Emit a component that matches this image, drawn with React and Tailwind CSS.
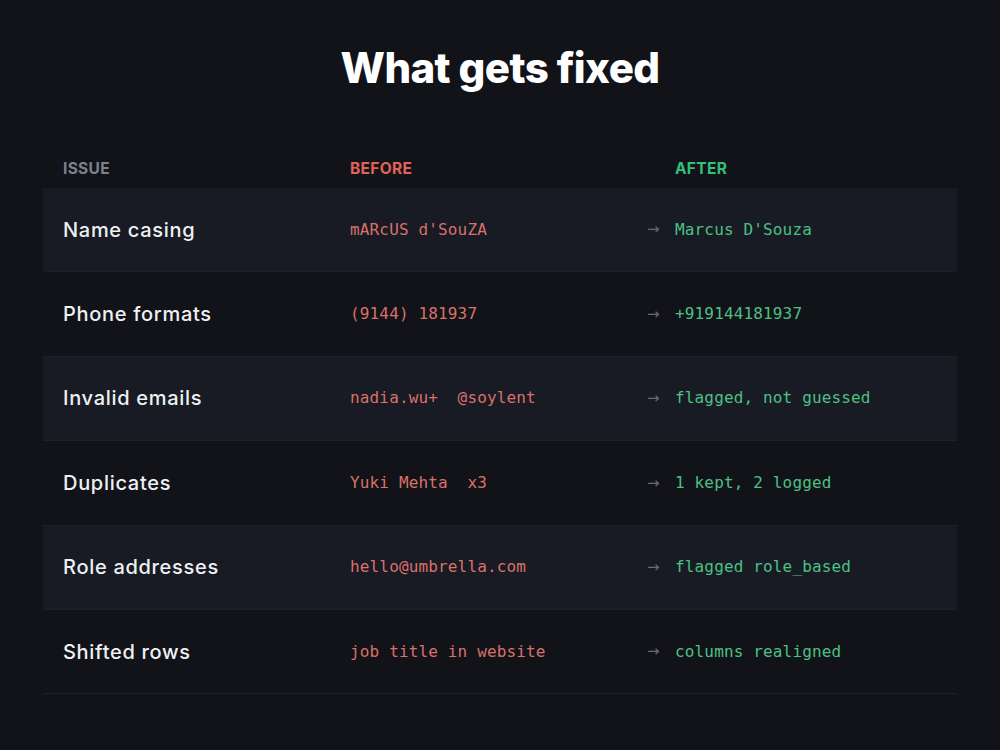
const rows = [
  { issue: 'Name casing', before: "mARcUS d'SouZA", after: "Marcus D'Souza" },
  { issue: 'Phone formats', before: '(9144) 181937', after: '+919144181937' },
  { issue: 'Invalid emails', before: 'nadia.wu+  @soylent', after: 'flagged, not guessed' },
  { issue: 'Duplicates', before: 'Yuki Mehta  x3', after: '1 kept, 2 logged' },
  { issue: 'Role addresses', before: 'hello@umbrella.com', after: 'flagged role_based' },
  { issue: 'Shifted rows', before: 'job title in website', after: 'columns realigned' },
];

const sans = "font-['Inter','Noto_Sans',sans-serif]";
const mono = "font-['DejaVu_Sans_Mono','Liberation_Mono',monospace] text-[16px] tracking-[0.15px] whitespace-pre";

export default function App() {
  return (
    <div className={`min-h-[750px] w-full bg-[#121318] ${sans}`}>
      <h1 className="pt-[42px] text-center text-[42px] font-extrabold leading-[52px] tracking-[-0.6px] text-white">
        What gets fixed
      </h1>

      <div className="mx-[43px] mt-[56px]">
        {/* Header */}
        <div className="flex h-[38px] items-start pt-2 text-[15.5px] font-bold uppercase leading-[22px] tracking-[0.3px]">
          <div className="w-[287px] pl-5 text-[#7b818e]">Issue</div>
          <div className="w-[297px] pl-5 text-[#e0625a]">Before</div>
          <div className="flex-1 pl-[48px] text-[#33c07a]">After</div>
        </div>

        {rows.map((r, i) => (
          <div
            key={r.issue}
            className={`flex h-[84.4px] items-center border-b border-[#1d2029] ${i % 2 === 0 ? 'bg-[#181b23]' : ''}`}
          >
            <div className="w-[287px] pl-5 text-[20px] font-medium tracking-[0.7px] text-[#eef0f3]">{r.issue}</div>
            <div className={`w-[297px] pl-5 text-[#d9706a] ${mono}`}>{r.before}</div>
            <div className="flex flex-1 items-center pl-5">
              <span className="w-[28px] font-['DejaVu_Sans',sans-serif] text-[15px] text-[#666b76]">→</span>
              <span className={`text-[#4cc085] ${mono}`}>{r.after}</span>
            </div>
          </div>
        ))}
      </div>
    </div>
  );
}
